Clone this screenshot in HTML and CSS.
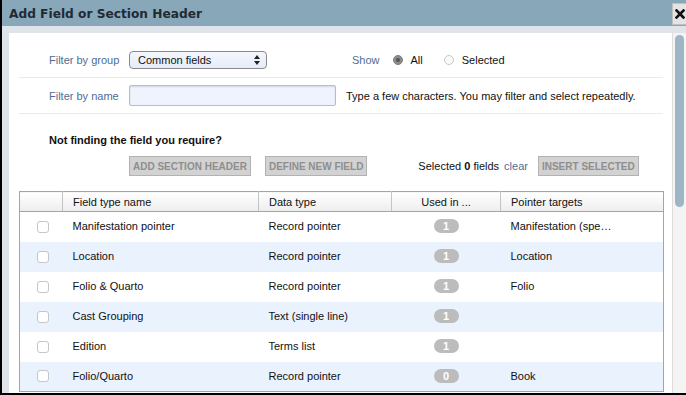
FILE: index.html
```html
<!DOCTYPE html>
<html lang="en">
<head>
  <meta charset="UTF-8" />
  <title>Add Field or Section Header</title>
  <link rel="stylesheet" href="styles.css">
</head>
<body>

  <div class="dialog">
    <!-- Title bar -->
    <div class="titlebar">
      <span class="title">Add Field or Section Header</span>
      <div class="close-btn">
        <svg width="10" height="10" viewBox="0 0 10 10"><path d="M1.5 1.5 L8.5 8.5 M8.5 1.5 L1.5 8.5" stroke="#111" stroke-width="2.6" stroke-linecap="square"/></svg>
      </div>
    </div>

    <div class="body-wrap">
      <div class="panel">

        <!-- Filters -->
        <div class="form-row">
          <span class="label">Filter by group</span>
          <div class="select">
            <span>Common fields</span>
            <svg width="6" height="10" viewBox="0 0 6 10"><path d="M3 0 L6 4 L0 4 Z M0 6 L6 6 L3 10 Z" fill="#222"/></svg>
          </div>
          <span class="label show-label">Show</span>
          <span class="radio checked"></span><span class="radio-text">All</span>
          <span class="radio"></span><span class="radio-text">Selected</span>
        </div>

        <div class="form-row">
          <span class="label">Filter by name</span>
          <div class="text-input"></div>
          <span class="hint">Type a few characters. You may filter and select repeatedly.</span>
        </div>

        <div class="not-finding">Not finding the field you require?</div>

        <div class="actions">
          <button class="btn">ADD SECTION HEADER</button>
          <button class="btn">DEFINE NEW FIELD</button>
          <span class="selected-info">Selected <b>0</b> fields</span>
          <span class="clear-link">clear</span>
          <button class="btn">INSERT SELECTED</button>
        </div>

        <!-- Field table -->
        <table class="fields">
          <thead>
            <tr>
              <th class="col-check"></th>
              <th class="col-name">Field type name</th>
              <th class="col-type">Data type</th>
              <th class="col-used">Used in ...</th>
              <th class="col-target">Pointer targets</th>
            </tr>
          </thead>
          <tbody>
            <tr>
              <td class="col-check"><span class="checkbox"></span></td>
              <td>Manifestation pointer</td>
              <td>Record pointer</td>
              <td class="col-used"><span class="badge">1</span></td>
              <td>Manifestation (spe…</td>
            </tr>
            <tr>
              <td class="col-check"><span class="checkbox"></span></td>
              <td>Location</td>
              <td>Record pointer</td>
              <td class="col-used"><span class="badge">1</span></td>
              <td>Location</td>
            </tr>
            <tr>
              <td class="col-check"><span class="checkbox"></span></td>
              <td>Folio &amp; Quarto</td>
              <td>Record pointer</td>
              <td class="col-used"><span class="badge">1</span></td>
              <td>Folio</td>
            </tr>
            <tr>
              <td class="col-check"><span class="checkbox"></span></td>
              <td>Cast Grouping</td>
              <td>Text (single line)</td>
              <td class="col-used"><span class="badge">1</span></td>
              <td></td>
            </tr>
            <tr>
              <td class="col-check"><span class="checkbox"></span></td>
              <td>Edition</td>
              <td>Terms list</td>
              <td class="col-used"><span class="badge">1</span></td>
              <td></td>
            </tr>
            <tr>
              <td class="col-check"><span class="checkbox"></span></td>
              <td>Folio/Quarto</td>
              <td>Record pointer</td>
              <td class="col-used"><span class="badge">0</span></td>
              <td>Book</td>
            </tr>
          </tbody>
        </table>
      </div>

      <!-- Scrollbar -->
      <div class="scrollbar">
        <div class="thumb"></div>
      </div>
    </div>
  </div>

</body>
</html>
```

FILE: styles.css
```css
* {
  box-sizing: border-box;
}

body {
  margin: 0;
  font-family: 'Liberation Sans', Arial, sans-serif;
  font-size: 11px;
  color: #222;
  background-color: #000;
}

.dialog {
  width: 684px;
  height: 395px;
  margin-left: 2px;
  display: flex;
  flex-direction: column;
  overflow: hidden;
  background-color: #dfe4ea;
  border-bottom: 2px solid #000;
}

/* Title bar */
.titlebar {
  height: 26px;
  flex-shrink: 0;
  background-color: #88a7b9;
  display: flex;
  align-items: center;
  justify-content: space-between;
  padding-left: 7px;
}

.title {
  font-family: 'DejaVu Sans', Verdana, sans-serif;
  font-weight: bold;
  font-size: 12.2px;
  color: #1f2a33;
  margin-top: 2px;
}

.close-btn {
  width: 14px;
  height: 22px;
  margin-top: 2px;
  background-color: #e4e4e4;
  border: 1px solid #c0c0c0;
  border-right: none;
  display: flex;
  align-items: center;
  justify-content: center;
}

.body-wrap {
  flex: 1;
  display: flex;
  padding: 7px 0 0 7px;
  min-height: 0;
}

.panel {
  flex: 1;
  background-color: #fff;
  padding: 9px 9px 0 10px;
  overflow: hidden;
}

/* Scrollbar */
.scrollbar {
  width: 14px;
  flex-shrink: 0;
  background-color: #f4f4f4;
  border-left: 1px solid #dcdcdc;
  padding: 2px 0 0 2px;
}

.thumb {
  width: 9px;
  height: 172px;
  border-radius: 5px;
  background-color: #9db5c4;
}

/* Filter rows */
.form-row {
  height: 36px;
  display: flex;
  align-items: center;
  border-bottom: 1px solid #e9ecef;
  padding-left: 30px;
  white-space: nowrap;
}

.label {
  color: #4e6d96;
  width: 80px;
  flex-shrink: 0;
}

.show-label {
  width: auto;
  margin-left: 85px;
  margin-right: 13px;
}

.select {
  width: 138px;
  height: 18px;
  border: 1px solid #8a8a8a;
  border-radius: 4px;
  background: linear-gradient(#f3f6fc, #e6ecf8);
  display: flex;
  align-items: center;
  justify-content: space-between;
  padding: 0 6px 0 8px;
  color: #111;
}

.radio {
  width: 10px;
  height: 10px;
  border-radius: 50%;
  border: 1px solid #c8c8c8;
  background-color: #fafafa;
  margin-right: 8px;
  position: relative;
}

.radio.checked {
  background-color: #8c8c8c;
  border-color: #7e7e7e;
}

.radio.checked::after {
  content: '';
  position: absolute;
  left: 2px;
  top: 2px;
  width: 4px;
  height: 4px;
  border-radius: 50%;
  background-color: #555;
}

.radio-text {
  color: #111;
  margin-right: 21px;
}

.text-input {
  width: 207px;
  height: 21px;
  border: 1px solid #b9bec6;
  border-radius: 2px;
  background-color: #eef3fd;
  box-shadow: inset 0 1px 2px rgba(0,0,0,0.12);
}

.hint {
  margin-left: 10px;
  color: #111;
}

.not-finding {
  font-weight: bold;
  padding: 20px 0 0 30px;
  height: 41px;
  color: #111;
}

.actions {
  display: flex;
  align-items: center;
  padding-left: 110px;
  height: 22px;
  margin-bottom: 14px;
  white-space: nowrap;
}

.btn {
  font-family: 'Liberation Sans', Arial, sans-serif;
  font-size: 10px;
  font-weight: bold;
  color: #8e8e8e;
  background-color: #d2d2d2;
  border: 1px solid #b2b2b2;
  height: 20px;
  padding: 0 3px;
  margin-right: 14px;
}

.selected-info {
  margin-left: 37px;
  color: #111;
}

.clear-link {
  color: #4e6d96;
  margin-left: 5px;
  margin-right: 10px;
}

/* Field table */
.fields {
  width: 644px;
  border-collapse: collapse;
  border: 1px solid #a4a4a4;
  table-layout: fixed;
}

.fields th {
  height: 20px;
  font-weight: normal;
  text-align: left;
  padding: 0 10px;
  background: linear-gradient(#ffffff, #ededed);
  border-left: 1px solid #c4c4c4;
  border-bottom: 1px solid #a4a4a4;
  color: #111;
}

.fields th:first-child {
  border-left: none;
}

.fields td {
  height: 30px;
  padding: 0 10px 1px;
  color: #111;
}

.fields tbody tr:nth-child(even) td {
  background-color: #eaf2fd;
}

.col-check { width: 43px; }
.col-name { width: 196px; }
.col-type { width: 133px; }
.col-used { width: 109px; }
.col-target { width: 163px; }

.fields td.col-check {
  text-align: center;
  padding: 0 0 1px 3px;
}

.fields .col-used {
  text-align: center;
}

.checkbox {
  display: inline-block;
  width: 12px;
  height: 12px;
  border: 1px solid #c6c6c6;
  border-radius: 3px;
  background-color: #fff;
  vertical-align: middle;
}

.badge {
  display: inline-block;
  width: 25px;
  height: 14px;
  line-height: 14px;
  border-radius: 7px;
  background-color: #bcbcbc;
  color: #fff;
  font-weight: bold;
  font-size: 11px;
  text-align: center;
  vertical-align: middle;
}
```
